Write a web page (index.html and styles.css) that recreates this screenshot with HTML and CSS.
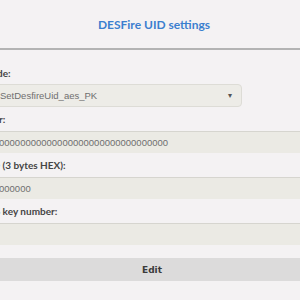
FILE: index.html
```html
<!DOCTYPE html>
<html lang="en">
<head>
<meta charset="UTF-8">
<meta name="viewport" content="width=device-width, initial-scale=1.0">
<title>DESFire UID settings</title>
<link rel="stylesheet" href="styles.css">
</head>
<body>
<div class="header">
    <h1>DESFire UID settings</h1>
</div>
<form class="settings">
    <label for="mode">Mode:</label>
    <div class="select-box" id="mode">
        <span>SetDesfireUid_aes_PK</span>
        <span class="arrow">&#9662;</span>
    </div>
    <label for="key">User:</label>
    <input type="text" id="key" value="00000000000000000000000000000000">
    <label for="uid">UID (3 bytes HEX):</label>
    <input type="text" id="uid" value="000000">
    <label for="keynr">AES key number:</label>
    <input type="text" id="keynr" value="">
    <button type="button" class="edit">Edit</button>
</form>
</body>
</html>
```
FILE: styles.css
```css
body {
    margin: 0;
    padding: 0;
    background-color: #f4f2f3;
    font-family: 'Lato', 'Liberation Sans', sans-serif;
    overflow: hidden;
}
.header {
    height: 48px;
    border-bottom: 2px solid #b3b3b3;
    display: flex;
    justify-content: center;
    align-items: center;
}
.header h1 {
    margin: 0 0 0 8px;
    font-size: 12px;
    font-weight: bold;
    color: #3b7fcf;
}
.settings {
    display: flex;
    flex-direction: column;
    margin: 0 -20px 0 -18px;
    padding-top: 11px;
}
.settings label {
    display: block;
    height: 24px;
    line-height: 24px;
    font-size: 10px;
    font-weight: bold;
    color: #454545;
}
.select-box {
    width: 260px;
    height: 23px;
    box-sizing: border-box;
    margin-top: -1px;
    padding: 0 0 0 17px;
    display: flex;
    justify-content: space-between;
    align-items: center;
    background-color: #edece7;
    border: 1px solid #dddcd6;
    border-radius: 4px;
    font-family: 'Liberation Sans', sans-serif;
    font-size: 9.5px;
    color: #6f6f6f;
}
.select-box .arrow {
    width: 23px;
    text-align: center;
    font-size: 8px;
    color: #555;
}
.settings input {
    height: 22px;
    box-sizing: border-box;
    margin: 0;
    padding: 0 0 0 17px;
    background-color: #ebeae4;
    border: none;
    border-top: 1px solid #d6d5cf;
    font-family: 'Liberation Sans', sans-serif;
    font-size: 9.5px;
    color: #6f6f6f;
}
.edit {
    margin-top: 13px;
    height: 23px;
    padding-right: 4px;
    background-color: #dcdbdb;
    border: none;
    font-family: 'DejaVu Sans', sans-serif;
    font-size: 9px;
    font-weight: bold;
    color: #3a3a3a;
}
```
